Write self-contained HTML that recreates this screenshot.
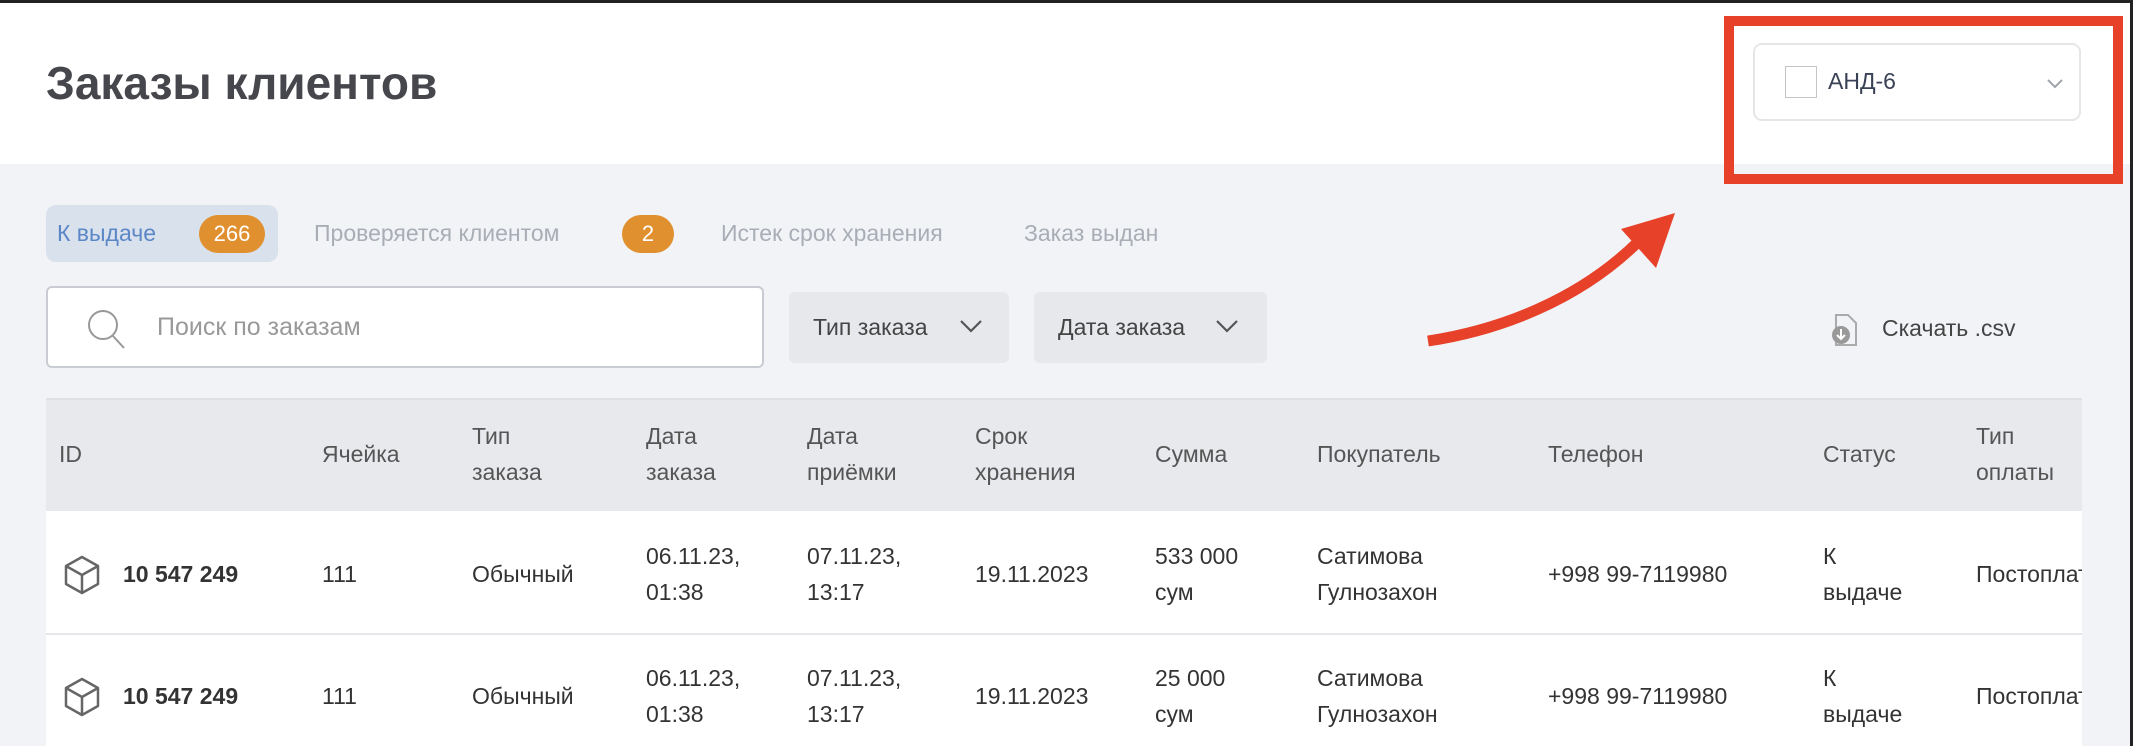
<!DOCTYPE html>
<html><head><meta charset="utf-8"><style>
*{margin:0;padding:0;box-sizing:border-box}
body{width:2138px;height:746px;overflow:hidden;background:#f1f3f7;font-family:"Liberation Sans","Noto Sans CJK SC",sans-serif;position:relative;color:#333}
.a{position:absolute;white-space:nowrap}
.hdr{position:absolute;left:0;top:0;width:2138px;height:164px;background:#fff}
.tab{font-size:23px;color:#a9adb5;top:220px}
.badge{position:absolute;background:#e0902f;color:#fff;border-radius:19px;height:38px;top:215px;font-size:22px;line-height:38px;text-align:center}
.btn{position:absolute;background:#e7e8ec;border-radius:6px;top:292px;height:71px;font-size:23px;color:#444;line-height:71px;padding-left:24px}
.table{position:absolute;left:46px;top:398px;width:2036px;height:348px;overflow:hidden;background:#fff}
.th{position:absolute;left:0;top:0;width:100%;height:113px;background:#e8e9ed;border-top:2px solid #dfe0e4}
.c{position:absolute;font-size:23px;line-height:36px;color:#555;white-space:nowrap}
.r{color:#333}
</style></head><body>
<div class="hdr"></div>
<div style="position:absolute;left:0;top:0;width:2138px;height:3px;background:#222"></div>
<div style="position:absolute;left:2130px;top:0;width:8px;height:746px;background:#fff;border-left:3px solid #222"></div>
<div class="a" style="left:46px;top:56px;font-size:46px;font-weight:bold;color:#46464d">Заказы клиентов</div>

<div style="position:absolute;left:46px;top:205px;width:232px;height:57px;background:#d8e1ec;border-radius:10px"></div>
<div class="a tab" style="left:57px;color:#5b87c7">К выдаче</div>
<div class="badge" style="left:199px;width:66px">266</div>
<div class="a tab" style="left:314px">Проверяется клиентом</div>
<div class="badge" style="left:622px;width:52px">2</div>
<div class="a tab" style="left:721px">Истек срок хранения</div>
<div class="a tab" style="left:1024px">Заказ выдан</div>

<div style="position:absolute;left:46px;top:286px;width:718px;height:82px;background:#fff;border:2px solid #c9ccd2;border-radius:6px"></div>
<svg class="a" style="left:86px;top:308px" width="42" height="42" viewBox="0 0 42 42"><circle cx="17" cy="17" r="14" fill="none" stroke="#999" stroke-width="2"/><path d="M27 28 L38 40" stroke="#999" stroke-width="2"/></svg>
<div class="a" style="left:157px;top:313px;font-size:25px;color:#999">Поиск по заказам</div>

<div class="btn" style="left:789px;width:220px">Тип заказа<svg style="position:absolute;left:170px;top:26px" width="24" height="16" viewBox="0 0 24 16"><path d="M2 3 L12 13 L22 3" fill="none" stroke="#555" stroke-width="2.2"/></svg></div>
<div class="btn" style="left:1034px;width:233px">Дата заказа<svg style="position:absolute;left:181px;top:26px" width="24" height="16" viewBox="0 0 24 16"><path d="M2 3 L12 13 L22 3" fill="none" stroke="#555" stroke-width="2.2"/></svg></div>

<svg class="a" style="left:1830px;top:313px" width="28" height="34" viewBox="0 0 28 34"><path d="M6 2 H18 L26 10 V32 H6 Z" fill="none" stroke="#aaa" stroke-width="2"/><circle cx="11" cy="22" r="9" fill="#999"/><path d="M11 16 V26 M7 22 L11 26 L15 22" stroke="#fff" stroke-width="2" fill="none"/></svg>
<div class="a" style="left:1882px;top:315px;font-size:23px;color:#444">Скачать .csv</div>

<div class="table">
<div class="th"></div>
<div class="c" style="left:13px;top:38px">ID</div>
<div class="c" style="left:276px;top:38px">Ячейка</div>
<div class="c" style="left:426px;top:20px">Тип<br>заказа</div>
<div class="c" style="left:600px;top:20px">Дата<br>заказа</div>
<div class="c" style="left:761px;top:20px">Дата<br>приёмки</div>
<div class="c" style="left:929px;top:20px">Срок<br>хранения</div>
<div class="c" style="left:1109px;top:38px">Сумма</div>
<div class="c" style="left:1271px;top:38px">Покупатель</div>
<div class="c" style="left:1502px;top:38px">Телефон</div>
<div class="c" style="left:1777px;top:38px">Статус</div>
<div class="c" style="left:1930px;top:20px">Тип<br>оплаты</div>
<div style="position:absolute;left:0;top:235px;width:100%;height:2px;background:#e6e7eb"></div>
</div>

<div class="table" style="background:transparent;height:122px;top:511px">
<svg class="a" style="left:17px;top:44px" width="38" height="40" viewBox="0 0 38 40"><path d="M19 2 L35 11 V29 L19 38 L3 29 V11 Z M3 11 L19 20 L35 11 M19 20 V38" fill="none" stroke="#666" stroke-width="2.5" stroke-linejoin="round"/></svg>
<div class="c r" style="left:77px;top:45px;font-weight:bold">10 547 249</div>
<div class="c r" style="left:276px;top:45px">111</div>
<div class="c r" style="left:426px;top:45px">Обычный</div>
<div class="c r" style="left:600px;top:27px">06.11.23,<br>01:38</div>
<div class="c r" style="left:761px;top:27px">07.11.23,<br>13:17</div>
<div class="c r" style="left:929px;top:45px">19.11.2023</div>
<div class="c r" style="left:1109px;top:27px">533 000<br>сум</div>
<div class="c r" style="left:1271px;top:27px">Сатимова<br>Гулнозахон</div>
<div class="c r" style="left:1502px;top:45px">+998 99-7119980</div>
<div class="c r" style="left:1777px;top:27px">К<br>выдаче</div>
<div class="c r" style="left:1930px;top:45px">Постоплата</div>
</div>
<div class="table" style="background:transparent;height:111px;top:635px">
<svg class="a" style="left:17px;top:42px" width="38" height="40" viewBox="0 0 38 40"><path d="M19 2 L35 11 V29 L19 38 L3 29 V11 Z M3 11 L19 20 L35 11 M19 20 V38" fill="none" stroke="#666" stroke-width="2.5" stroke-linejoin="round"/></svg>
<div class="c r" style="left:77px;top:43px;font-weight:bold">10 547 249</div>
<div class="c r" style="left:276px;top:43px">111</div>
<div class="c r" style="left:426px;top:43px">Обычный</div>
<div class="c r" style="left:600px;top:25px">06.11.23,<br>01:38</div>
<div class="c r" style="left:761px;top:25px">07.11.23,<br>13:17</div>
<div class="c r" style="left:929px;top:43px">19.11.2023</div>
<div class="c r" style="left:1109px;top:25px">25 000<br>сум</div>
<div class="c r" style="left:1271px;top:25px">Сатимова<br>Гулнозахон</div>
<div class="c r" style="left:1502px;top:43px">+998 99-7119980</div>
<div class="c r" style="left:1777px;top:25px">К<br>выдаче</div>
<div class="c r" style="left:1930px;top:43px">Постоплата</div>
</div>

<div style="position:absolute;left:1753px;top:43px;width:328px;height:78px;background:#fff;border:2px solid #e6e6e8;border-radius:9px"></div>
<div style="position:absolute;left:1785px;top:66px;width:32px;height:32px;border:1.5px solid #c4c4c4;background:#fff"></div>
<div class="a" style="left:1828px;top:68px;font-size:23px;color:#3a4256">АНД-6</div>
<svg class="a" style="left:2046px;top:78px" width="18" height="12" viewBox="0 0 18 12"><path d="M2 2 L9 9 L16 2" fill="none" stroke="#a0a4ab" stroke-width="2"/></svg>
<div style="position:absolute;left:1724px;top:16px;width:399px;height:168px;border:10px solid #e8412a"></div>

<svg class="a" style="left:0;top:0" width="2138" height="746" viewBox="0 0 2138 746">
<path d="M1428 341 C1500 330 1580 300 1640 240" fill="none" stroke="#e8412a" stroke-width="11"/>
<path d="M1621 229 L1675 213 L1656 268 Z" fill="#e8412a"/>
</svg>
</body></html>
